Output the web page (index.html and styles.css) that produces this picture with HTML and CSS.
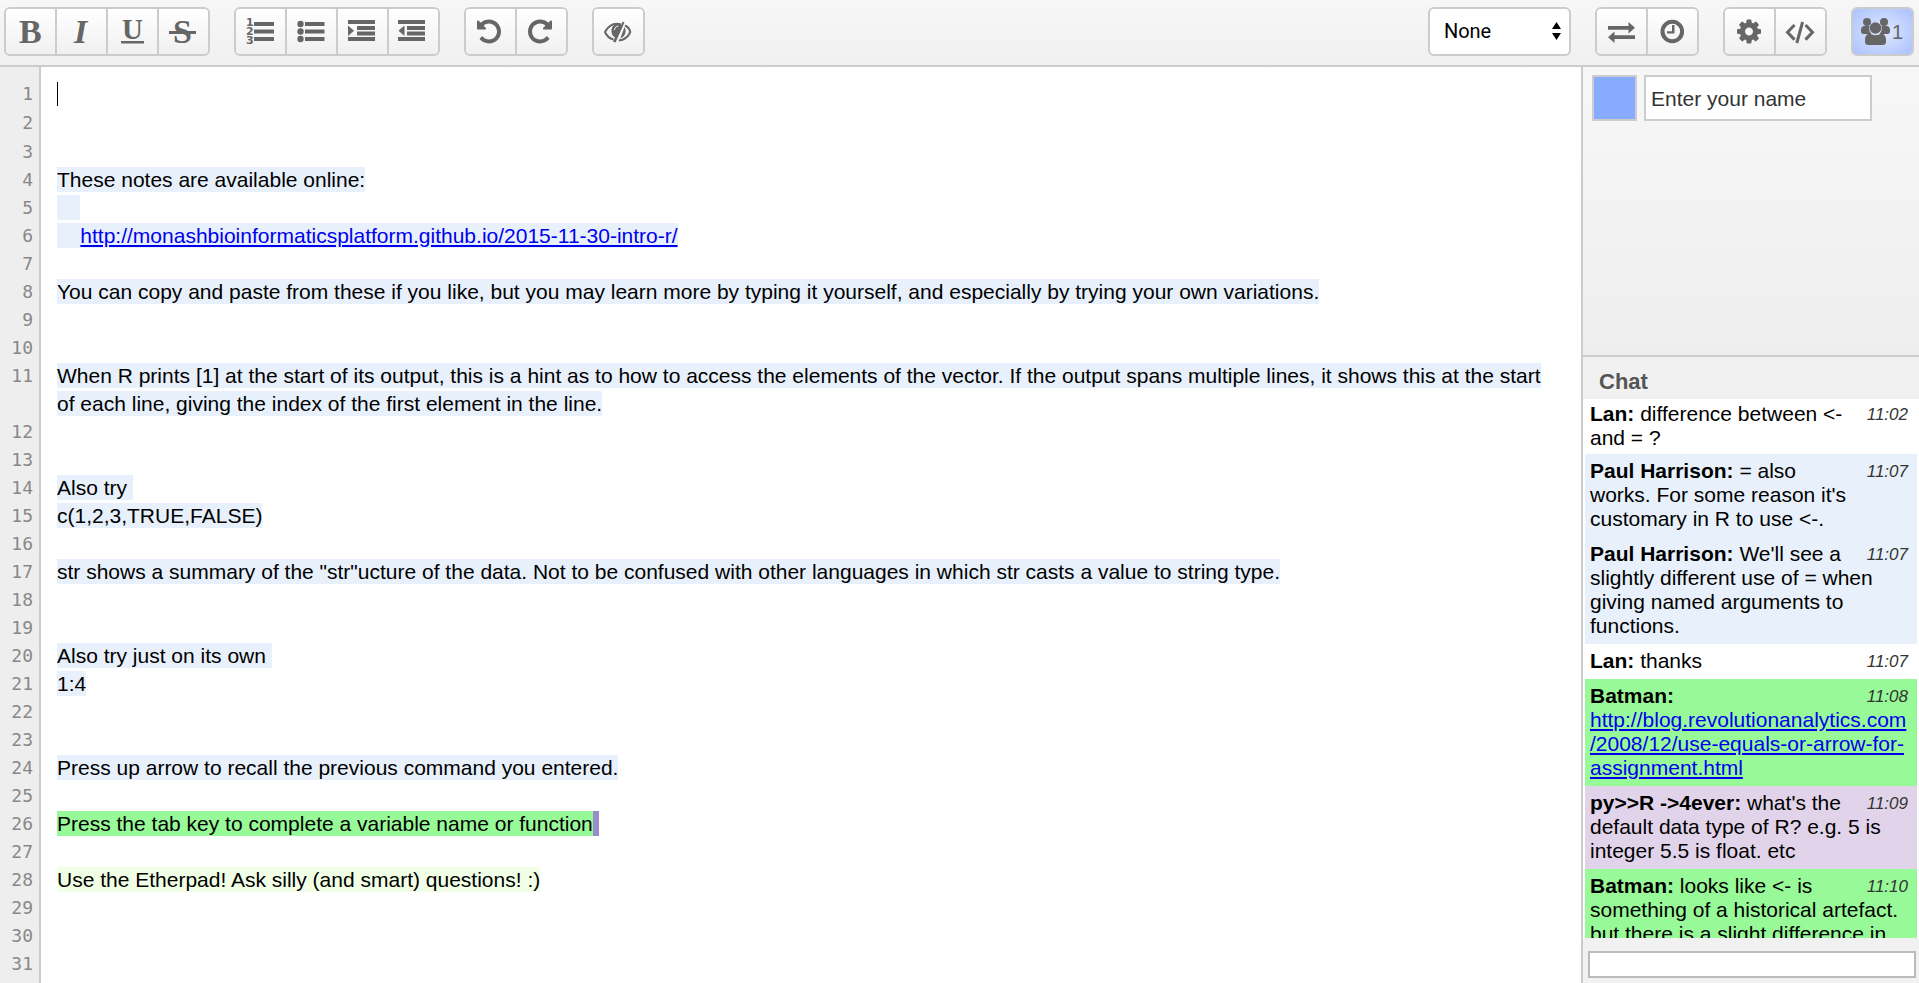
FILE: index.html
```html
<!DOCTYPE html>
<html lang="en">
<head>
<meta charset="utf-8">
<title>Etherpad</title>
<link rel="stylesheet" href="styles.css">
</head>
<body>
<header class="toolbar">
  <div class="tools">
    <div class="group">
      <button type="button" aria-label="Bold"><svg class="icon" viewBox="0 0 33 33"><text class="glyph" x="5" y="28" font-size="34">B</text></svg></button>
      <button type="button" aria-label="Italic"><svg class="icon" viewBox="0 0 33 33"><text class="glyph slanted" x="9" y="28" font-size="34">I</text></svg></button>
      <button type="button" aria-label="Underline"><svg class="icon" viewBox="0 0 33 33"><text class="glyph" x="6" y="24" font-size="29">U</text><path d="M5 26h23v2.500H5z"/></svg></button>
      <button type="button" aria-label="Strikethrough"><svg class="icon" viewBox="0 0 33 33"><text class="glyph" x="6" y="28" font-size="34">S</text><path d="M2 16h27v3H2z"/></svg></button>
    </div>
    <div class="group">
      <button type="button" aria-label="Ordered list"><svg class="icon" viewBox="0 0 33 33"><g class="digits"><text x="2" y="11">1</text><text x="2" y="20">2</text><text x="2" y="29">3</text></g><path d="M10 7h20v4H10zM10 14.500h20v4H10zM10 22h20v4H10z"/></svg></button>
      <button type="button" aria-label="Unordered list"><svg class="icon" viewBox="0 0 33 33"><circle cx="5.500" cy="9" r="3.200"/><circle cx="5.500" cy="16.500" r="3.200"/><circle cx="5.500" cy="24" r="3.200"/><path d="M10 7h19.500v4H10zM10 14.500h19.500v4H10zM10 22h19.500v4H10z"/></svg></button>
      <button type="button" aria-label="Indent"><svg class="icon" viewBox="0 0 33 33"><path d="M2 5h27v4H2zM11 11h18v4H11zM11 16.500h18v4H11zM2 22h27v4H2zM2 10.500l6 5.250-6 5.250z"/></svg></button>
      <button type="button" aria-label="Outdent"><svg class="icon" viewBox="0 0 33 33"><path d="M1 5h27v4H1zM10 11h18v4H10zM10 16.500h18v4H10zM1 22h27v4H1zM7.500 10.500l-6 5.250 6 5.250z"/></svg></button>
    </div>
    <div class="group">
      <button type="button" aria-label="Undo"><svg class="icon" viewBox="0 0 33 33"><path transform="translate(1 2.500) scale(.015625)" d="M1664 896q0 156-61 298t-164 245-245 164-298 61q-172 0-327-72.500t-264-204.500q-7-10-6.500-22.500t8.500-20.500l137-138q10-9 25-9 16 2 23 12 73 95 179 147t225 52q104 0 198.500-40.500t163.500-109.500 109.500-163.500 40.500-198.500-40.500-198.500-109.500-163.500-163.500-109.500-198.500-40.500q-98 0-188 35.500t-160 101.500l137 138q31 30 14 69-17 40-59 40h-448q-26 0-45-19t-19-45v-448q0-42 40-59 39-17 69 14l130 129q107-101 244.500-156.500t284.500-55.500q156 0 298 61t245 164 164 245 61 298z"/></svg></button>
      <button type="button" aria-label="Redo"><svg class="icon" viewBox="0 0 33 33"><path transform="translate(29 2.500) scale(-.015625 .015625)" d="M1664 896q0 156-61 298t-164 245-245 164-298 61q-172 0-327-72.500t-264-204.500q-7-10-6.500-22.500t8.500-20.500l137-138q10-9 25-9 16 2 23 12 73 95 179 147t225 52q104 0 198.500-40.500t163.500-109.500 109.500-163.500 40.500-198.500-40.500-198.500-109.500-163.500-163.500-109.500-198.500-40.500q-98 0-188 35.500t-160 101.500l137 138q31 30 14 69-17 40-59 40h-448q-26 0-45-19t-19-45v-448q0-42 40-59 39-17 69 14l130 129q107-101 244.500-156.500t284.500-55.500q156 0 298 61t245 164 164 245 61 298z"/></svg></button>
    </div>
    <div class="group">
      <button type="button" aria-label="Clear authorship colors"><svg class="icon" viewBox="0 0 33 33"><path class="line" d="M19.500 9.500C11.500 7 6 11.500 3 17c1.500 3.500 4.500 6.500 8.500 7.500"/><path class="line" d="M23 10.500c3 1.500 4.800 4 5.300 6.500-2 4.500-6 8-11.500 8.500"/><path d="M20 10c-3-2.500-9-1.500-10.300 3.500-.9 4 .6 7.500 3.300 9l-2 4 2.500 1L22.500 7.500 20.300 6.500zM22.500 12c2.200 3.500 1.500 9-4.200 11.500z"/><path class="shine" d="M12.500 15c.3-2.500 1.800-3.800 3.800-3.800"/></svg></button>
    </div>
  </div>
  <div class="tools">
    <div class="picker">
      <select aria-label="Heading style"><option>None</option></select>
      <svg class="picker-arrows" viewBox="0 0 9 18"><path d="M4.500 0L9 7H0zM4.500 18L0 11h9z"/></svg>
    </div>
    <div class="group">
      <button type="button" aria-label="Import and export"><svg class="icon" viewBox="0 0 33 33"><path d="M3 11h20.500V7l6.500 5.800-6.500 5.700v-3.700H3zM30 20.200H9.500v-3.700L3 22.200 9.500 28v-4H30z"/></svg></button>
      <button type="button" aria-label="Timeslider"><svg class="icon" viewBox="0 0 33 33"><circle class="ring" cx="16.300" cy="16.500" r="9.800"/><path d="M16 10h2.500v8.500h-7.500v-2.300H16z"/></svg></button>
    </div>
    <div class="group">
      <button type="button" aria-label="Settings"><svg class="icon" viewBox="0 0 33 33"><path transform="translate(2 2.500) scale(.015625)" d="M1152 896q0-106-75-181t-181-75-181 75-75 181 75 181 181 75 181-75 75-181zm512-109v222q0 12-8 23t-20 13l-185 28q-19 54-39 91 35 50 107 138 10 12 10 25t-9 23q-27 37-99 108t-94 71q-12 0-26-9l-138-108q-44 23-91 38-16 136-29 186-7 28-36 28h-222q-14 0-24.500-8.500t-11.500-21.500l-28-184q-49-16-90-37l-141 107q-10 9-25 9-14 0-25-11-126-114-165-168-7-10-7-23 0-12 8-23 15-21 51-66.500t54-70.500q-27-50-41-99l-183-27q-13-2-21-12.500t-8-23.500v-222q0-12 8-23t19-13l186-28q14-46 39-92-40-57-107-138-10-12-10-24 0-10 9-23 26-36 98.500-107.500t94.500-71.500q13 0 26 10l138 107q44-23 91-38 16-136 29-186 7-28 36-28h222q14 0 24.500 8.500t11.500 21.500l28 184q49 16 90 37l142-107q9-9 24-9 13 0 25 10 129 119 165 170 7 8 7 22 0 12-8 23-15 21-51 66.500t-54 70.500q26 50 41 98l183 28q13 2 21 12.500t8 23.500z"/></svg></button>
      <button type="button" aria-label="Share and embed"><svg class="icon" viewBox="0 0 33 33"><path class="chevron" d="M10.500 10L3.500 17.300l7 7.300M21.500 10l7 7.300-7 7.300M18.600 7L12.800 28"/></svg></button>
    </div>
    <div class="group">
      <button type="button" class="users-button" aria-label="Users"><svg class="users-icon" viewBox="0 0 29 27"><circle cx="6" cy="4" r="4"/><circle cx="23" cy="4" r="4"/><path d="M0 12c0-2.500 1.500-4 3.500-4h5c-.8 3 0 6 2 8H2.500C1 16 0 15 0 13.500zM29 12c0-2.500-1.500-4-3.500-4h-5c.8 3 0 6-2 8h8c1.500 0 2.500-1 2.500-2.500z"/><path d="M4 22c0-4 2-6.500 5-6.500 1.500 1 3.300 1.700 5.500 1.700s4-.7 5.500-1.700c3 0 5 2.500 5 6.500v2c0 2-1.500 3-3 3H7c-1.500 0-3-1-3-3z"/><circle cx="14.500" cy="10" r="5.800"/></svg><span>1</span></button>
    </div>
  </div>
</header>
<main class="workspace">
  <section class="pad">
    <div class="gutter" aria-hidden="true">
      <div class="tall">1</div><div class="tall">2</div><div>3</div><div>4</div><div>5</div><div>6</div><div>7</div><div>8</div><div>9</div><div>10</div><div class="double">11</div><div>12</div><div>13</div><div>14</div><div>15</div><div>16</div><div>17</div><div>18</div><div>19</div><div>20</div><div>21</div><div>22</div><div>23</div><div>24</div><div>25</div><div>26</div><div>27</div><div>28</div><div>29</div><div>30</div><div>31</div>
    </div>
    <div class="document">
      <div class="row"><span class="caret"></span></div>
      <div class="row"></div>
      <div class="row"></div>
      <div class="row"><span class="paul">These notes are available online:</span></div>
      <div class="row"><span class="paul">&nbsp;&nbsp;&nbsp;&nbsp;</span></div>
      <div class="row"><span class="paul">&nbsp;&nbsp;&nbsp;&nbsp;<a href="http://monashbioinformaticsplatform.github.io/2015-11-30-intro-r/">http://monashbioinformaticsplatform.github.io/2015-11-30-intro-r/</a></span></div>
      <div class="row"></div>
      <div class="row"><span class="paul">You can copy and paste from these if you like, but you may learn more by typing it yourself, and especially by trying your own variations.</span></div>
      <div class="row"></div>
      <div class="row"></div>
      <div class="row"><span class="paul">When R prints [1] at the start of its output, this is a hint as to how to access the elements of the vector. If the output spans multiple lines, it shows this at the start of each line, giving the index of the first element in the line.</span></div>
      <div class="row"></div>
      <div class="row"></div>
      <div class="row"><span class="paul">Also try&nbsp;</span></div>
      <div class="row"><span class="paul">c(1,2,3,TRUE,FALSE)</span></div>
      <div class="row"></div>
      <div class="row"><span class="paul">str shows a summary of the "str"ucture of the data. Not to be confused with other languages in which str casts a value to string type.</span></div>
      <div class="row"></div>
      <div class="row"></div>
      <div class="row"><span class="paul">Also try just on its own&nbsp;</span></div>
      <div class="row"><span class="paul">1:4</span></div>
      <div class="row"></div>
      <div class="row"></div>
      <div class="row"><span class="paul">Press up arrow to recall the previous command you entered.</span></div>
      <div class="row"></div>
      <div class="row"><span class="batman">Press the tab key to complete a variable name or function</span><span class="violet">&nbsp;</span></div>
      <div class="row"></div>
      <div class="row"><span class="lime">Use the Etherpad! Ask silly (and smart) questions! :)</span></div>
      <div class="row"></div>
      <div class="row"></div>
      <div class="row"></div>
    </div>
  </section>
  <aside class="sidebar">
    <section class="users">
      <button type="button" class="swatch" aria-label="Your color"></button>
      <input class="name" type="text" placeholder="Enter your name" aria-label="Your name">
    </section>
    <section class="chat">
      <h2>Chat</h2>
      <div class="messages">
        <p><time>11:02</time><b>Lan:</b> difference between &lt;- and = ?</p>
        <p class="paul"><time>11:07</time><b>Paul Harrison:</b> = also works. For some reason it's customary in R to use &lt;-.</p>
        <p class="paul"><time>11:07</time><b>Paul Harrison:</b> We'll see a slightly different use of = when giving named arguments to functions.</p>
        <p><time>11:07</time><b>Lan:</b> thanks</p>
        <p class="batman"><time>11:08</time><b>Batman:</b> <a href="http://blog.revolutionanalytics.com/2008/12/use-equals-or-arrow-for-assignment.html">http://blog.revolutionanalytics.com<wbr>/2008/12/use-equals-or-arrow-for-assignment.html</a></p>
        <p class="py"><time>11:09</time><b>py&gt;&gt;R -&gt;4ever:</b> what's the default data type of R? e.g. 5 is integer 5.5 is float. etc</p>
        <p class="batman"><time>11:10</time><b>Batman:</b> looks like &lt;- is something of a historical artefact. but there is a slight difference in</p>
      </div>
      <div class="compose"><input type="text" aria-label="Chat message"></div>
    </section>
  </aside>
</main>
</body>
</html>
```

FILE: styles.css
```css
* {
  box-sizing: border-box;
}

body {
  margin: 0;
  height: 100vh;
  display: flex;
  flex-direction: column;
  overflow: hidden;
  background: #fff;
  color: #000;
  font: 21px/24px "Liberation Sans", Arial, sans-serif;
}

button,
input,
select {
  margin: 0;
  font: inherit;
}

a {
  color: #00e;
}

/* Toolbar */
.toolbar {
  display: flex;
  justify-content: space-between;
  padding: 7px 5px 9px 4px;
  border-bottom: 2px solid #ccc;
  background: linear-gradient(#f7f7f7, #f0f0f0);
}

.tools {
  display: flex;
  gap: 24px;
}

.group {
  display: flex;
  border: 2px solid #ccc;
  border-radius: 6px;
}

.group button {
  display: flex;
  align-items: center;
  justify-content: center;
  width: 49px;
  height: 45px;
  padding: 0;
  border: 0;
  border-radius: 4px;
  background: linear-gradient(#fff, #f0f0f0);
  color: #666;
}

.group button + button {
  width: 51px;
  border-left: 2px solid #ccc;
  border-radius: 0 4px 4px 0;
}

.icon {
  width: 33px;
  height: 33px;
  fill: #666;
  overflow: visible;
}

.glyph {
  font-family: "Liberation Serif", "Times New Roman", serif;
  font-weight: bold;
}

.slanted {
  font-style: italic;
}

.digits {
  font: bold 11px "DejaVu Sans", sans-serif;
}

.line,
.ring,
.chevron,
.shine {
  fill: none;
  stroke: #666;
}

.line {
  stroke-width: 2;
}

.shine {
  stroke: #f7f7f7;
  stroke-width: 1;
}

.ring {
  stroke-width: 4;
}

.chevron {
  stroke-width: 3;
}

.group .users-button {
  gap: 2px;
  width: auto;
  padding: 0 9px 0 8px;
  background: radial-gradient(#e2e9ff, #a9c1fd);
  font-size: 20px;
}

.users-icon {
  width: 29px;
  height: 27px;
  fill: #666;
}

.picker {
  position: relative;
  width: 143px;
}

.picker select {
  appearance: none;
  width: 100%;
  height: 49px;
  padding: 0 30px 2px 14px;
  border: 2px solid #ccc;
  border-radius: 6px;
  background: #fff;
  color: #000;
  font: 20px Roboto, sans-serif;
}

.picker-arrows {
  position: absolute;
  top: 15px;
  right: 10px;
  width: 9px;
  height: 18px;
  pointer-events: none;
}

/* Pad */
.workspace {
  flex: 1;
  min-height: 0;
  display: flex;
}

.pad {
  flex: 1;
  min-width: 0;
  display: flex;
  overflow: hidden;
}

.gutter {
  flex: none;
  width: 41px;
  padding: 13px 6px 0 0;
  border-right: 2px solid #ccc;
  background: #eee;
  color: #888;
  font: 18px/28px "DejaVu Sans Mono", monospace;
  text-align: right;
}

.gutter .tall {
  height: 29px;
}

.gutter .double {
  height: 56px;
}

.document {
  flex: 1;
  min-width: 0;
  padding: 15px 26px 0 16px;
  line-height: 28px;
}

.row {
  min-height: 28px;
}

.row span {
  padding: 1px 0;
}

.row .caret {
  display: block;
  width: 1px;
  height: 24px;
  padding: 0;
  background: #000;
}

.paul {
  background: #e8f1fb;
}

.batman {
  background: #98f998;
}

.violet {
  background: #9a8cc8;
}

.lime {
  background: #f0ffe6;
}

.py {
  background: #e1d4ea;
}

/* Sidebar */
.sidebar {
  flex: none;
  width: 338px;
  display: flex;
  flex-direction: column;
  border-left: 2px solid #ccc;
}

.users {
  display: flex;
  align-items: flex-start;
  gap: 7px;
  min-height: 288px;
  padding: 8px 9px;
  background: linear-gradient(#f7f7f7, #eee);
}

.swatch {
  width: 45px;
  height: 46px;
  padding: 0;
  border: 2px solid #ccc;
  background: #88aaff;
}

.name {
  width: 228px;
  height: 46px;
  padding: 2px 5px 0;
  border: 2px solid #ccc;
  background: #fff;
}

.name::placeholder {
  color: #333;
  opacity: 1;
}

.chat {
  flex: 1;
  min-height: 0;
  display: flex;
  flex-direction: column;
  border-top: 2px solid #ccc;
  background: #f1f1f1;
}

.chat h2 {
  margin: 0;
  padding: 13px 16px 5px;
  color: #555;
  font-size: 22px;
  line-height: 24px;
}

.messages {
  flex: 1;
  min-height: 0;
  overflow: hidden;
  padding: 0 2px;
  background: #fff;
}

.messages p {
  margin: 0;
  padding: 5px 5px 6px;
}

.messages p:first-child {
  padding: 3px 5px 4px;
}

.messages time {
  float: right;
  margin: 2px 4px 0 8px;
  color: #333;
  font-size: 17px;
  font-style: italic;
  line-height: 22px;
}

.compose {
  padding: 13px 3px 5px 5px;
}

.compose input {
  display: block;
  width: 100%;
  height: 27px;
  padding: 0 4px;
  border: 2px solid #bbb;
  background: #fff;
}
```
